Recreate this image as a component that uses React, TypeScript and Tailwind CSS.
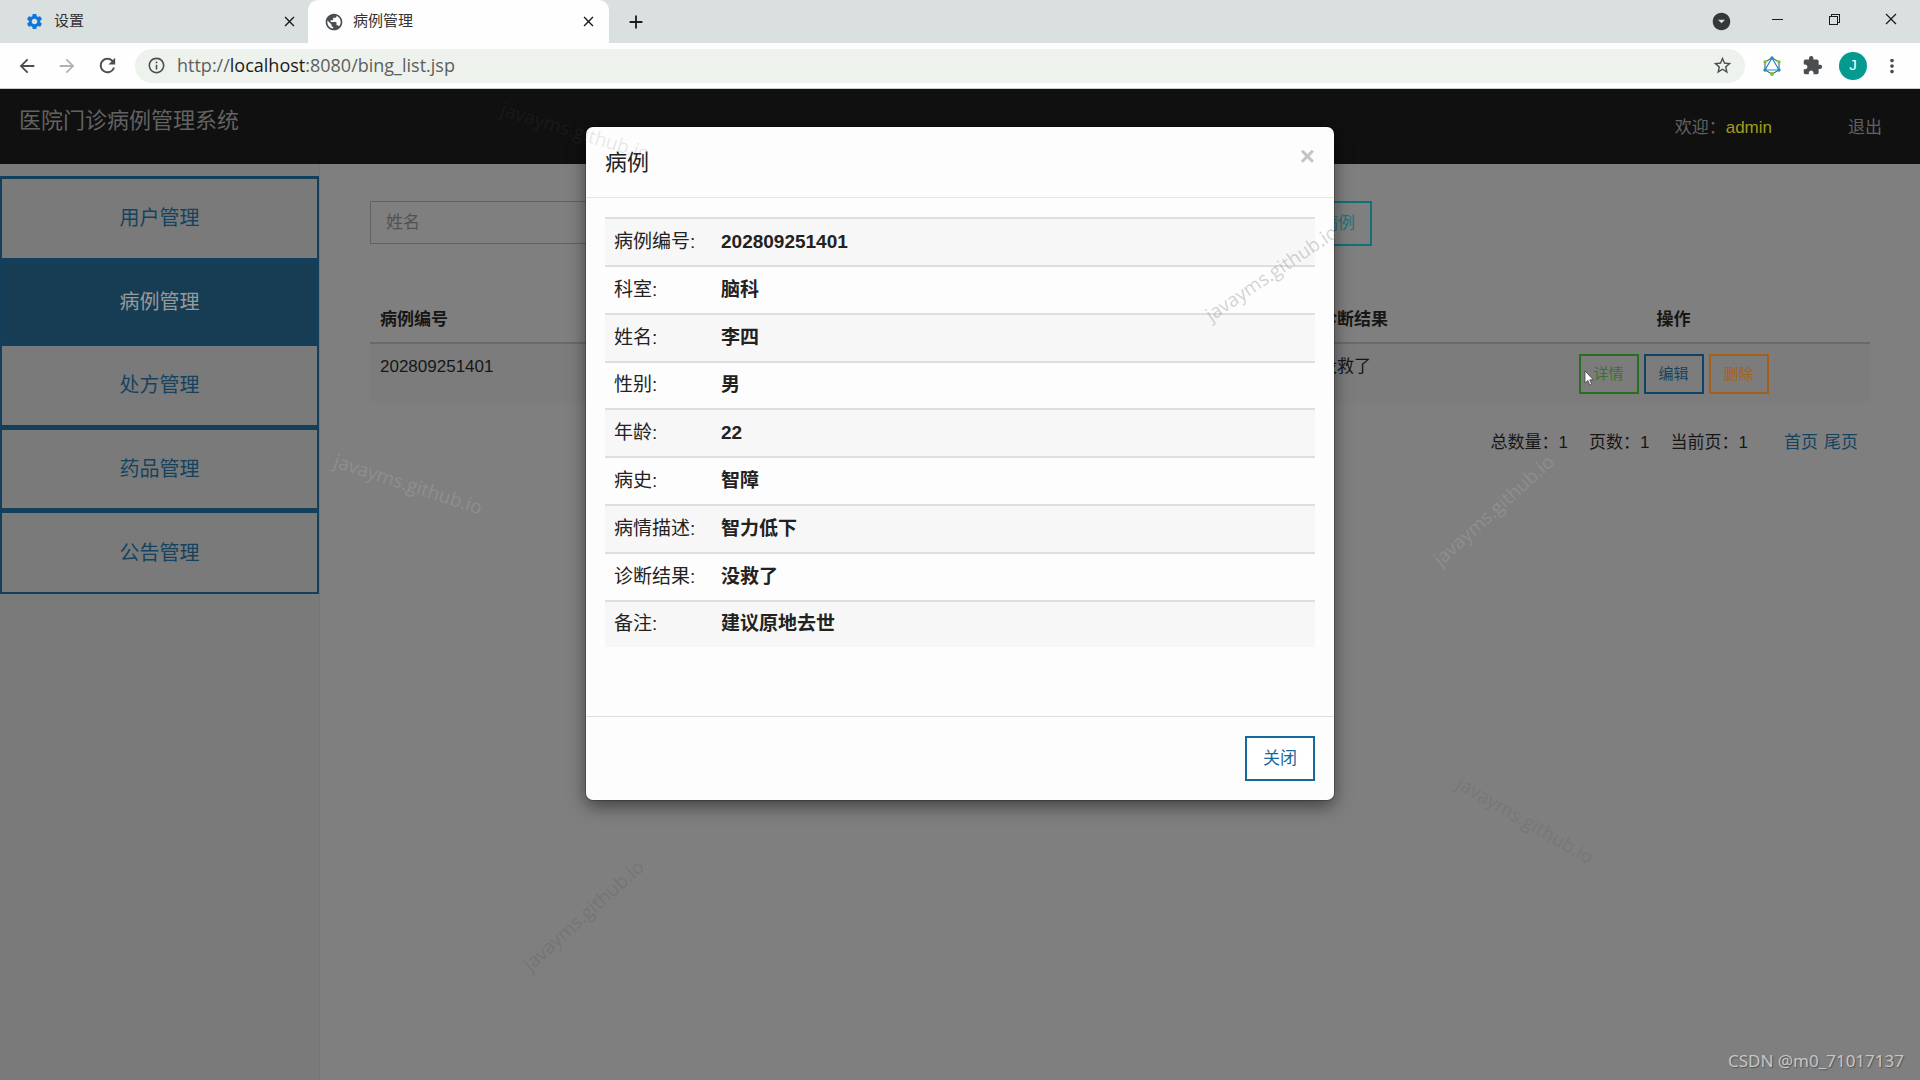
import React, { useState } from 'react';
import {
  MdAdd,
  MdArrowBack,
  MdArrowDropDownCircle,
  MdArrowForward,
  MdClose,
  MdExtension,
  MdInfoOutline,
  MdMoreVert,
  MdPublic,
  MdRefresh,
  MdSettings,
  MdStarBorder,
} from 'react-icons/md';
import { VscChromeClose, VscChromeMinimize, VscChromeRestore } from 'react-icons/vsc';

const menu = ['用户管理', '病例管理', '处方管理', '药品管理', '公告管理'];

const record = [
  { label: '病例编号', value: '202809251401' },
  { label: '科室', value: '脑科' },
  { label: '姓名', value: '李四' },
  { label: '性别', value: '男' },
  { label: '年龄', value: '22' },
  { label: '病史', value: '智障' },
  { label: '病情描述', value: '智力低下' },
  { label: '诊断结果', value: '没救了' },
  { label: '备注', value: '建议原地去世' },
];

const watermarks = [
  'left-[498px] top-[30px] rotate-[17deg] text-[#5a5a5a]/15',
  'left-[1194px] top-[172px] rotate-[-34deg] text-[#808080]/35',
  'left-[331px] top-[383px] rotate-[18deg] text-[#8e8e8e]',
  'left-[1416px] top-[409px] rotate-[-42deg] text-[#8e8e8e]',
  'left-[506px] top-[814px] rotate-[-42deg] text-[#757575]',
  'left-[1448px] top-[719px] rotate-[30deg] text-[#777777]',
];

function TabStrip() {
  return (
    <div className="flex h-[43px] items-stretch bg-[#dae0df] text-[15px] text-[#333]">
      <div className="flex w-[308px] items-center pl-[25px] pr-[10px]">
        <MdSettings size={19} className="text-[#0b76e0]" />
        <span className="ml-[10px] flex-1">设置</span>
        <button aria-label="关闭标签页" className="text-[#1c1c1c]"><MdClose size={17} /></button>
      </div>
      <div className="flex w-[301px] items-center rounded-t-[10px] bg-[#fdfefd] pl-[16px] pr-[12px]">
        <MdPublic size={20} className="text-[#4a4e50]" />
        <span className="ml-[9px] flex-1">病例管理</span>
        <button aria-label="关闭标签页" className="text-[#1c1c1c]"><MdClose size={17} /></button>
      </div>
      <button aria-label="新标签页" className="ml-[16px] text-[#1c1c1c]"><MdAdd size={22} /></button>
      <div className="ml-auto flex items-center text-[#1c1c1c]">
        <button aria-label="搜索标签页" className="mr-[37px] text-[#33393a]"><MdArrowDropDownCircle size={21} /></button>
        <div className="flex gap-[41px] pr-[21px] pb-[6px]">
          <button aria-label="最小化"><VscChromeMinimize size={16} /></button>
          <button aria-label="还原"><VscChromeRestore size={16} /></button>
          <button aria-label="关闭"><VscChromeClose size={16} /></button>
        </div>
      </div>
    </div>
  );
}

// six-node ring with a triangle inside, used by the browser extension
function ExtensionLogo() {
  return (
    <svg width="20" height="20" viewBox="0 0 20 20" fill="none">
      <path d="M10 2 L17 6 V14 L10 18 L3 14 V6 Z" stroke="#5a6a6e" strokeWidth="1.2" />
      <path d="M10 2 L17 14 H3 Z" stroke="#1e8cc8" strokeWidth="1.2" />
      <circle cx="10" cy="2" r="1.7" fill="#1e8cc8" />
      <circle cx="17" cy="14" r="1.7" fill="#1e8cc8" />
      <circle cx="3" cy="14" r="1.7" fill="#1e8cc8" />
      <circle cx="17" cy="6" r="1.7" fill="#7ac22e" />
      <circle cx="3" cy="6" r="1.7" fill="#7ac22e" />
      <circle cx="10" cy="18" r="1.9" fill="#7ac22e" />
    </svg>
  );
}

function AddressBar() {
  return (
    <div className="flex h-[46px] items-center border-b border-[#c8cccb] bg-[#fdfefd] pl-[16px] pr-[17px] text-[#4a4e50]">
      <div className="flex gap-[18px]">
        <button aria-label="后退"><MdArrowBack size={22} /></button>
        <button aria-label="前进" className="text-[#b0b2b2]"><MdArrowForward size={22} /></button>
        <button aria-label="刷新"><MdRefresh size={23} /></button>
      </div>
      <div className="ml-[16px] flex h-[34px] flex-1 items-center rounded-full bg-[#edf2ec] pl-[12px] pr-[12px]">
        <MdInfoOutline size={19} />
        <span className="ml-[11px] flex-1 font-['Open_Sans','Noto_Sans_CJK_SC',sans-serif] text-[18px] text-[#5c6060]">
          http://<span className="text-[#1a1a1a]">localhost</span>:8080/bing_list.jsp
        </span>
        <button aria-label="收藏"><MdStarBorder size={21} /></button>
      </div>
      <div className="ml-[17px] flex items-center">
        <button aria-label="扩展"><ExtensionLogo /></button>
        <button aria-label="扩展程序" className="ml-[20px]"><MdExtension size={21} /></button>
        <button className="ml-[16px] h-[28px] w-[28px] rounded-full bg-[#049a90] text-[15px] text-white">J</button>
        <button aria-label="菜单" className="ml-[14px]"><MdMoreVert size={22} /></button>
      </div>
    </div>
  );
}

function RecordModal({ onClose }: { onClose: () => void }) {
  return (
    <div role="dialog" aria-label="病例" className="absolute inset-x-0 top-[38px] mx-auto w-[748px] rounded-[7px] bg-[#fdfdfd] text-[#222] shadow-[0_6px_18px_rgba(0,0,0,0.5),0_0_0_1px_rgba(0,0,0,0.2)]">
      <div className="flex h-[71px] items-start justify-between border-b border-[#e5e5e5] px-[19px] pt-[19px]">
        <h4 className="text-[22px] leading-[34px]">病例</h4>
        <button aria-label="关闭" onClick={onClose} className="text-[26px] leading-[20px] font-bold text-[#c4c4c4]">×</button>
      </div>
      <div className="px-[19px] pt-[19px] pb-[69px]">
        <table className="h-[430px] w-full text-left text-[19px] leading-[26px]">
          <tbody>
            {record.map(r => (
              <tr key={r.label} className="border-t-2 border-[#dedede] odd:bg-[#f7f7f7]">
                <td className="w-[106px] pl-[9px]">{r.label}:</td>
                <th scope="row" className="pl-[10px] font-bold">{r.value}</th>
              </tr>
            ))}
          </tbody>
        </table>
      </div>
      <div className="flex justify-end border-t border-[#dfe0e0] px-[19px] py-[19px]">
        <button onClick={onClose} className="h-[45px] w-[70px] border-2 border-[#17699c] bg-white text-[17px] text-[#17699c]">关闭</button>
      </div>
    </div>
  );
}

export default function App() {
  const [open, setOpen] = useState(true);
  const [active, setActive] = useState('病例管理');

  return (
    <div className="flex min-h-screen flex-col overflow-hidden font-['Liberation_Sans','Noto_Sans_CJK_SC',sans-serif]">
      <TabStrip />
      <AddressBar />

      <div className="relative flex flex-1 flex-col overflow-hidden bg-[#7f7f7f] text-[17px] leading-[24px] text-[#161616]">
        <header className="flex h-[75px] justify-between bg-[#101010] pl-[19px] pr-[38px] text-[#626262]">
          <h1 className="pt-[16px] text-[22px] leading-[32px]">医院门诊病例管理系统</h1>
          <div className="flex pt-[27px]">
            <span>欢迎：<span className="text-[#a39c1c]">admin</span></span>
            <a href="#" className="ml-[76px]">退出</a>
          </div>
        </header>

        <div className="flex flex-1">
          <nav className="w-[320px] border-r border-[#757575] bg-[#7a7a7a] pt-[12px]">
            <div className="flex h-[418px] flex-col">
              {menu.map(m => (
                <button
                  key={m}
                  onClick={() => setActive(m)}
                  className={`flex-1 border-2 border-t-[3px] border-[#123f5b] text-[20px] ${m === active ? 'bg-[#173d54] text-[#9a9a9a]' : 'text-[#15435f]'}`}
                >
                  {m}
                </button>
              ))}
            </div>
          </nav>

          <main className="flex-1 px-[50px] pt-[37px]">
            <div className="flex w-[1002px] items-start justify-between">
              <input placeholder="姓名" aria-label="姓名" className="h-[43px] w-[480px] border border-[#626262] px-[15px] placeholder:text-[#525252]" />
              <button className="h-[45px] border-2 border-[#127078] px-[15px] text-[#1f757d]">添加病例</button>
            </div>

            <table className="mt-[51px] w-full table-fixed text-left">
              <thead>
                <tr className="h-[46px] border-b-2 border-[#6a6a6a]">
                  <th className="px-[10px] font-bold">病例编号</th>
                  <th className="w-[167px] px-[10px] font-bold">诊断结果</th>
                  <th className="w-[393px] text-center font-bold">操作</th>
                </tr>
              </thead>
              <tbody>
                <tr className="h-[60px] bg-[#7c7c7c] align-top">
                  <td className="px-[10px] pt-[11px]">202809251401</td>
                  <td className="px-[10px] pt-[11px]">没救了</td>
                  <td className="pt-[10px]">
                    <div className="flex justify-center gap-[5px] text-[15px]">
                      <button onClick={() => setOpen(true)} className="h-[40px] w-[60px] border-2 border-[#286e22] text-[#35752f]">详情</button>
                      <button className="h-[40px] w-[60px] border-2 border-[#0f4467] text-[#15435f]">编辑</button>
                      <button className="h-[40px] w-[60px] border-2 border-[#a4601a] text-[#a5631c]">删除</button>
                    </div>
                  </td>
                </tr>
              </tbody>
            </table>

            <div className="mt-[28px] flex justify-end pr-[12px]">
              <span className="mr-[21px]">总数量：1</span>
              <span className="mr-[21px]">页数：1</span>
              <span className="mr-[36px]">当前页：1</span>
              <a href="#" className="mr-[6px] text-[#15435f]">首页</a>
              <a href="#" className="text-[#15435f]">尾页</a>
            </div>
          </main>
        </div>

        {open && <RecordModal onClose={() => setOpen(false)} />}

        {watermarks.map(w => (
          <span key={w} className={`pointer-events-none absolute font-['Open_Sans',sans-serif] text-[19px] ${w}`}>javayms.github.io</span>
        ))}

        <svg className="pointer-events-none absolute top-[281px] right-[326px]" width="10" height="16" viewBox="0 0 10 16">
          <path d="M1 1 V13 L4 10.4 L5.8 15 L7.6 14.2 L5.8 9.8 H9.4 Z" fill="#fff" stroke="#333" strokeWidth="0.7" />
        </svg>

        <span className="absolute right-[16px] bottom-[7px] font-['Noto_Sans',sans-serif] text-[17px] text-[#c6c6c6] [text-shadow:1px_1px_1px_#555]">CSDN @m0_71017137</span>
      </div>
    </div>
  );
}
